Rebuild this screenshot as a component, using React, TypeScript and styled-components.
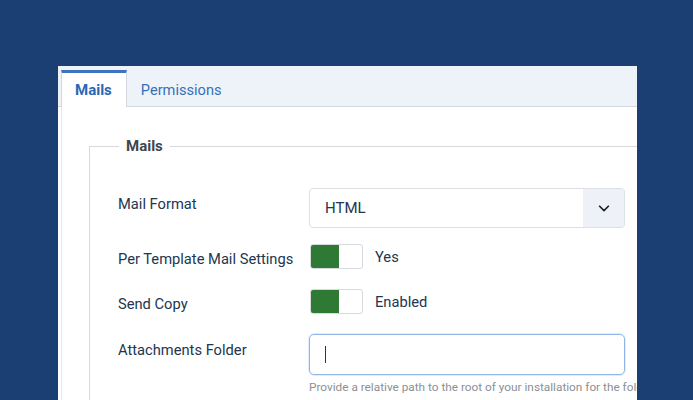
import React from 'react';
import styled, { createGlobalStyle } from 'styled-components';

const GlobalStyle = createGlobalStyle`
  html, body {
    margin: 0;
    padding: 0;
    background: #1b3f73;
    font-family: Roboto, 'Liberation Sans', sans-serif;
    overflow: hidden;
  }
`;

const Page = styled.div`
  width: 693px;
  height: 400px;
  padding: 66px 0 0 58px;
  box-sizing: border-box;
`;

const Panel = styled.div`
  width: 579px;
  height: 334px;
  background: #fff;
  overflow: hidden;
  display: flex;
  flex-direction: column;
`;

const TabBar = styled.div`
  display: flex;
  align-items: flex-end;
  height: 41px;
  padding-left: 3px;
  background: #eef3fa;
  border-bottom: 1px solid #d3d8df;
  box-sizing: border-box;
  flex-shrink: 0;
`;

const Tab = styled.div<{ $active?: boolean }>`
  height: ${(p) => (p.$active ? '37px' : '36px')};
  margin-bottom: ${(p) => (p.$active ? '-1px' : '0')};
  padding: 0 ${(p) => (p.$active ? '14px' : '14px')} 0 ${(p) => (p.$active ? '13px' : '13px')};
  display: flex;
  align-items: center;
  box-sizing: border-box;
  font-size: ${(p) => (p.$active ? '15px' : '14.6px')};
  font-weight: ${(p) => (p.$active ? 700 : 400)};
  color: ${(p) => (p.$active ? '#2a67b5' : '#3570b8')};
  background: ${(p) => (p.$active ? '#fff' : 'transparent')};
  border-top: 3px solid ${(p) => (p.$active ? '#3d74c0' : 'transparent')};
  border-left: 1px solid ${(p) => (p.$active ? '#d3d8df' : 'transparent')};
  border-right: 1px solid ${(p) => (p.$active ? '#d3d8df' : 'transparent')};
`;

const Content = styled.div`
  flex: 1;
  margin-left: 3px;
  border-left: 1px solid #e4e7eb;
  padding: 30px 0 0 27px;
  overflow: hidden;
`;

const Fieldset = styled.fieldset`
  margin: 0;
  padding: 33px 0 60px 28px;
  border: 1px solid #d6d9dd;
  border-right: none;
  min-width: 0;
`;

const Legend = styled.legend`
  margin-left: 1px;
  padding: 0 7px;
  font-size: 15px;
  font-weight: 700;
  color: #40464d;
`;

const Row = styled.div<{ $gap: number }>`
  display: grid;
  grid-template-columns: 191px 316px;
  align-items: start;
  margin-bottom: ${(p) => p.$gap}px;
`;

const Label = styled.div<{ $top: number }>`
  font-size: 14.7px;
  color: #22364f;
  padding-top: ${(p) => p.$top}px;
`;

const Select = styled.div`
  height: 40px;
  display: flex;
  border: 1px solid #dcdfe3;
  border-radius: 4px;
  box-sizing: border-box;
  overflow: hidden;
`;

const SelectValue = styled.div`
  flex: 1;
  display: flex;
  align-items: center;
  padding-left: 15px;
  font-size: 15px;
  color: #22364f;
`;

const SelectArrow = styled.div`
  width: 41px;
  display: flex;
  align-items: center;
  justify-content: center;
  background: #eef2f8;
  color: #1d2733;
`;

const SwitchLine = styled.div`
  display: flex;
  align-items: center;
  gap: 12px;
  font-size: 14.7px;
  color: #22364f;
`;

const Switch = styled.div`
  width: 53px;
  height: 25px;
  display: flex;
  border: 1px solid #d6d9dd;
  border-radius: 3px;
  box-sizing: border-box;
  overflow: hidden;
  margin: -1px 0 0 1px;
`;

const SwitchOn = styled.div`
  width: 28px;
  background: #2e7a34;
`;

const TextInput = styled.div`
  height: 41px;
  border: 1px solid #8fb6e6;
  border-radius: 5px;
  box-shadow: 0 0 0 1px #e3edf9;
  box-sizing: border-box;
  display: flex;
  align-items: center;
  padding-left: 15px;
`;

const Caret = styled.div`
  width: 1px;
  height: 17px;
  background: #333;
`;

const Help = styled.div`
  margin-top: 5px;
  font-size: 11.8px;
  color: #8b9097;
  white-space: nowrap;
`;

export default function App() {
  return (
    <Page>
      <GlobalStyle />
      <Panel>
        <TabBar>
          <Tab $active>Mails</Tab>
          <Tab>Permissions</Tab>
        </TabBar>
        <Content>
          <Fieldset>
            <Legend>Mails</Legend>
            <Row $gap={17}>
              <Label $top={7}>Mail Format</Label>
              <Select>
                <SelectValue>HTML</SelectValue>
                <SelectArrow>
                  <svg width="14" height="14" viewBox="0 0 16 16" fill="none" stroke="currentColor" strokeWidth="2" strokeLinecap="round" strokeLinejoin="round">
                    <path d="M3 6l5 5 5-5" />
                  </svg>
                </SelectArrow>
              </Select>
            </Row>
            <Row $gap={21}>
              <Label $top={5}>Per Template Mail Settings</Label>
              <SwitchLine>
                <Switch><SwitchOn /></Switch>
                <span>Yes</span>
              </SwitchLine>
            </Row>
            <Row $gap={20}>
              <Label $top={5}>Send Copy</Label>
              <SwitchLine>
                <Switch><SwitchOn /></Switch>
                <span>Enabled</span>
              </SwitchLine>
            </Row>
            <Row $gap={0}>
              <Label $top={7}>Attachments Folder</Label>
              <div>
                <TextInput><Caret /></TextInput>
                <Help>Provide a relative path to the root of your installation for the folder</Help>
              </div>
            </Row>
          </Fieldset>
        </Content>
      </Panel>
    </Page>
  );
}
